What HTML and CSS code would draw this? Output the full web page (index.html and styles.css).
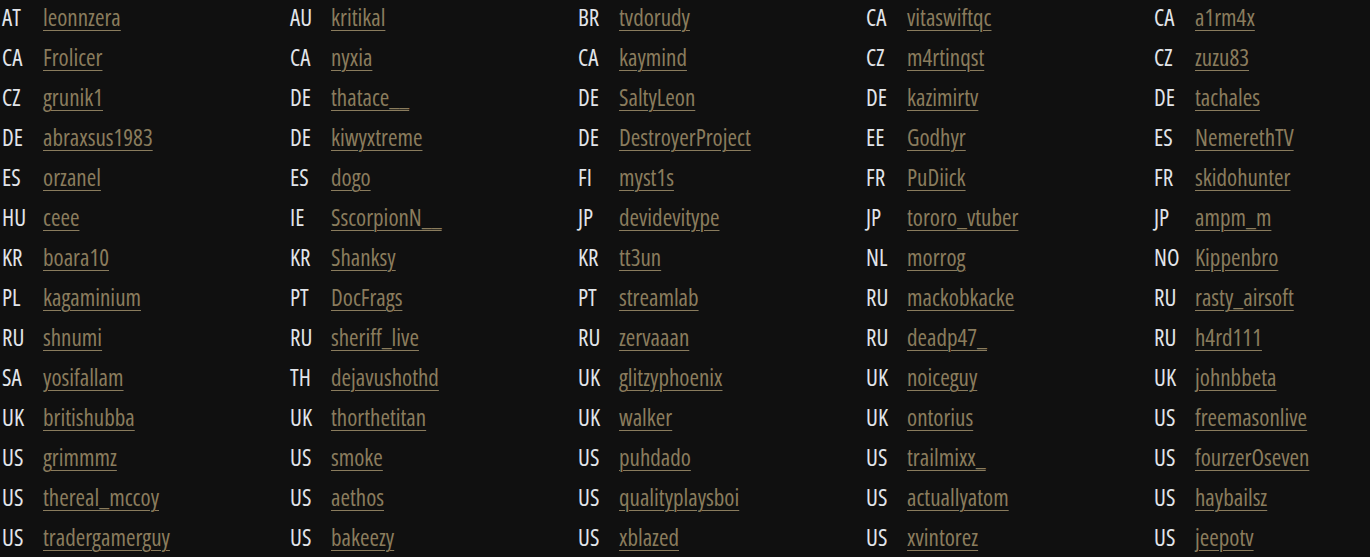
FILE: index.html
```html
<!DOCTYPE html>
<html lang="en">
<head>
<meta charset="utf-8">
<title>Streamers</title>
<link rel="stylesheet" href="styles.css">
</head>
<body>
<div class="grid">
<div class="cell"><span class="cc">AT</span><a class="name" href="#">leonnzera</a></div>
<div class="cell"><span class="cc">AU</span><a class="name" href="#">kritikal</a></div>
<div class="cell"><span class="cc">BR</span><a class="name" href="#">tvdorudy</a></div>
<div class="cell"><span class="cc">CA</span><a class="name" href="#">vitaswiftqc</a></div>
<div class="cell"><span class="cc">CA</span><a class="name" href="#">a1rm4x</a></div>
<div class="cell"><span class="cc">CA</span><a class="name" href="#">Frolicer</a></div>
<div class="cell"><span class="cc">CA</span><a class="name" href="#">nyxia</a></div>
<div class="cell"><span class="cc">CA</span><a class="name" href="#">kaymind</a></div>
<div class="cell"><span class="cc">CZ</span><a class="name" href="#">m4rtinqst</a></div>
<div class="cell"><span class="cc">CZ</span><a class="name" href="#">zuzu83</a></div>
<div class="cell"><span class="cc">CZ</span><a class="name" href="#">grunik1</a></div>
<div class="cell"><span class="cc">DE</span><a class="name" href="#">thatace__</a></div>
<div class="cell"><span class="cc">DE</span><a class="name" href="#">SaltyLeon</a></div>
<div class="cell"><span class="cc">DE</span><a class="name" href="#">kazimirtv</a></div>
<div class="cell"><span class="cc">DE</span><a class="name" href="#">tachales</a></div>
<div class="cell"><span class="cc">DE</span><a class="name" href="#">abraxsus1983</a></div>
<div class="cell"><span class="cc">DE</span><a class="name" href="#">kiwyxtreme</a></div>
<div class="cell"><span class="cc">DE</span><a class="name" href="#">DestroyerProject</a></div>
<div class="cell"><span class="cc">EE</span><a class="name" href="#">Godhyr</a></div>
<div class="cell"><span class="cc">ES</span><a class="name" href="#">NemerethTV</a></div>
<div class="cell"><span class="cc">ES</span><a class="name" href="#">orzanel</a></div>
<div class="cell"><span class="cc">ES</span><a class="name" href="#">dogo</a></div>
<div class="cell"><span class="cc">FI</span><a class="name" href="#">myst1s</a></div>
<div class="cell"><span class="cc">FR</span><a class="name" href="#">PuDiick</a></div>
<div class="cell"><span class="cc">FR</span><a class="name" href="#">skidohunter</a></div>
<div class="cell"><span class="cc">HU</span><a class="name" href="#">ceee</a></div>
<div class="cell"><span class="cc">IE</span><a class="name" href="#">SscorpionN__</a></div>
<div class="cell"><span class="cc">JP</span><a class="name" href="#">devidevitype</a></div>
<div class="cell"><span class="cc">JP</span><a class="name" href="#">tororo_vtuber</a></div>
<div class="cell"><span class="cc">JP</span><a class="name" href="#">ampm_m</a></div>
<div class="cell"><span class="cc">KR</span><a class="name" href="#">boara10</a></div>
<div class="cell"><span class="cc">KR</span><a class="name" href="#">Shanksy</a></div>
<div class="cell"><span class="cc">KR</span><a class="name" href="#">tt3un</a></div>
<div class="cell"><span class="cc">NL</span><a class="name" href="#">morrog</a></div>
<div class="cell"><span class="cc">NO</span><a class="name" href="#">Kippenbro</a></div>
<div class="cell"><span class="cc">PL</span><a class="name" href="#">kagaminium</a></div>
<div class="cell"><span class="cc">PT</span><a class="name" href="#">DocFrags</a></div>
<div class="cell"><span class="cc">PT</span><a class="name" href="#">streamlab</a></div>
<div class="cell"><span class="cc">RU</span><a class="name" href="#">mackobkacke</a></div>
<div class="cell"><span class="cc">RU</span><a class="name" href="#">rasty_airsoft</a></div>
<div class="cell"><span class="cc">RU</span><a class="name" href="#">shnumi</a></div>
<div class="cell"><span class="cc">RU</span><a class="name" href="#">sheriff_live</a></div>
<div class="cell"><span class="cc">RU</span><a class="name" href="#">zervaaan</a></div>
<div class="cell"><span class="cc">RU</span><a class="name" href="#">deadp47_</a></div>
<div class="cell"><span class="cc">RU</span><a class="name" href="#">h4rd111</a></div>
<div class="cell"><span class="cc">SA</span><a class="name" href="#">yosifallam</a></div>
<div class="cell"><span class="cc">TH</span><a class="name" href="#">dejavushothd</a></div>
<div class="cell"><span class="cc">UK</span><a class="name" href="#">glitzyphoenix</a></div>
<div class="cell"><span class="cc">UK</span><a class="name" href="#">noiceguy</a></div>
<div class="cell"><span class="cc">UK</span><a class="name" href="#">johnbbeta</a></div>
<div class="cell"><span class="cc">UK</span><a class="name" href="#">britishubba</a></div>
<div class="cell"><span class="cc">UK</span><a class="name" href="#">thorthetitan</a></div>
<div class="cell"><span class="cc">UK</span><a class="name" href="#">walker</a></div>
<div class="cell"><span class="cc">UK</span><a class="name" href="#">ontorius</a></div>
<div class="cell"><span class="cc">US</span><a class="name" href="#">freemasonlive</a></div>
<div class="cell"><span class="cc">US</span><a class="name" href="#">grimmmz</a></div>
<div class="cell"><span class="cc">US</span><a class="name" href="#">smoke</a></div>
<div class="cell"><span class="cc">US</span><a class="name" href="#">puhdado</a></div>
<div class="cell"><span class="cc">US</span><a class="name" href="#">trailmixx_</a></div>
<div class="cell"><span class="cc">US</span><a class="name" href="#">fourzerOseven</a></div>
<div class="cell"><span class="cc">US</span><a class="name" href="#">thereal_mccoy</a></div>
<div class="cell"><span class="cc">US</span><a class="name" href="#">aethos</a></div>
<div class="cell"><span class="cc">US</span><a class="name" href="#">qualityplaysboi</a></div>
<div class="cell"><span class="cc">US</span><a class="name" href="#">actuallyatom</a></div>
<div class="cell"><span class="cc">US</span><a class="name" href="#">haybailsz</a></div>
<div class="cell"><span class="cc">US</span><a class="name" href="#">tradergamerguy</a></div>
<div class="cell"><span class="cc">US</span><a class="name" href="#">bakeezy</a></div>
<div class="cell"><span class="cc">US</span><a class="name" href="#">xblazed</a></div>
<div class="cell"><span class="cc">US</span><a class="name" href="#">xvintorez</a></div>
<div class="cell"><span class="cc">US</span><a class="name" href="#">jeepotv</a></div>
</div>
</body>
</html>
```
FILE: styles.css
```css
html, body {
  margin: 0;
  padding: 0;
  background: #101010;
  overflow: hidden;
}
body {
  font-family: "Open Sans", sans-serif;
  font-stretch: 75%;
  font-weight: 500;
  font-size: 23px;
}
.grid {
  display: grid;
  grid-template-columns: repeat(5, 288px);
  grid-auto-rows: 40px;
  padding-left: 2px;
  margin-top: -3px;
}
.cell {
  display: flex;
  align-items: center;
  white-space: nowrap;
}
.cc {
  width: 41px;
  flex: none;
  color: #e2e5ea;
}
.name {
  color: #8a7c5d;
  text-decoration: underline;
  text-decoration-color: #8a7c5d;
  text-decoration-thickness: 1px;
  text-underline-offset: 4px;
}
```
